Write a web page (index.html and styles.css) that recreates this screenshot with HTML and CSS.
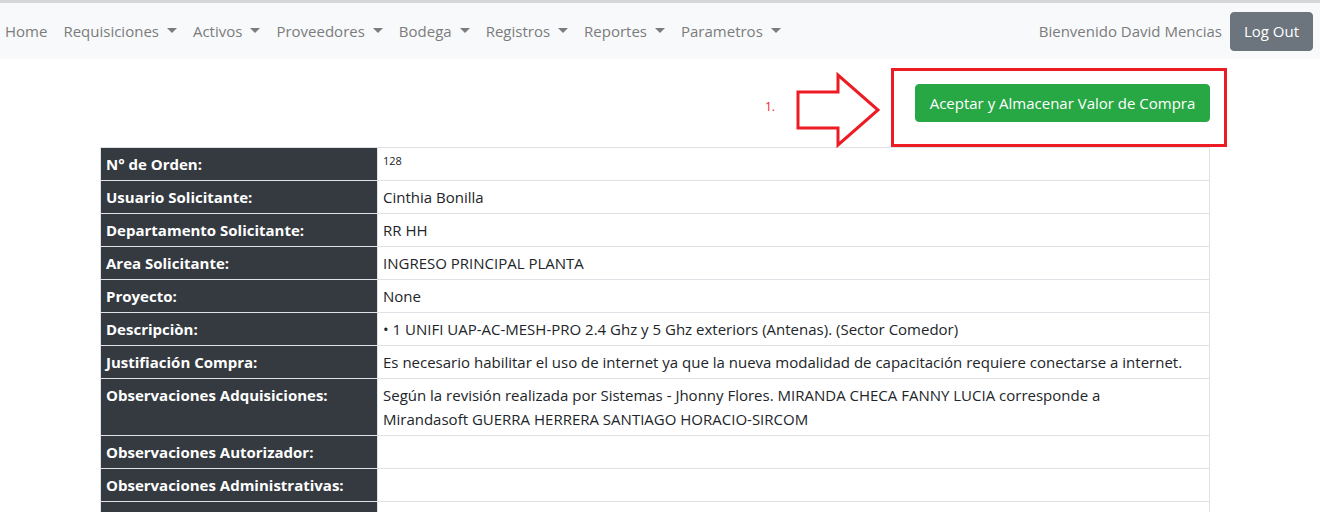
FILE: index.html
```html
<!DOCTYPE html>
<html lang="es">
<head>
<meta charset="utf-8">
<title>Requisición</title>
<link rel="stylesheet" href="styles.css">
</head>
<body>
<nav class="navbar">
  <ul class="nav-menu">
    <li><a class="nav-link" href="#">Home</a></li>
    <li><a class="nav-link dropdown" href="#">Requisiciones</a></li>
    <li><a class="nav-link dropdown" href="#">Activos</a></li>
    <li><a class="nav-link dropdown" href="#">Proveedores</a></li>
    <li><a class="nav-link dropdown" href="#">Bodega</a></li>
    <li><a class="nav-link dropdown" href="#">Registros</a></li>
    <li><a class="nav-link dropdown" href="#">Reportes</a></li>
    <li><a class="nav-link dropdown" href="#">Parametros</a></li>
  </ul>
  <div class="nav-user">
    <span class="welcome">Bienvenido David Mencias</span>
    <button class="btn btn-secondary">Log Out</button>
  </div>
</nav>

<main class="container">
  <div class="action-row">
    <span class="annot-num">1.</span>
    <svg class="annot-arrow" width="88" height="76" viewBox="0 0 88 76">
      <polygon points="3,20 43,20 43,3 83,38 43,73 43,56 3,56" fill="none" stroke="#ed1c24" stroke-width="3" stroke-linejoin="miter"/>
    </svg>
    <div class="annot-box"></div>
    <button class="btn btn-success">Aceptar y Almacenar Valor de Compra</button>
  </div>

  <table class="detail">
    <colgroup><col class="col-label"><col></colgroup>
    <tbody>
      <tr><th>N° de Orden:</th><td><span class="small">128</span></td></tr>
      <tr><th>Usuario Solicitante:</th><td>Cinthia Bonilla</td></tr>
      <tr><th>Departamento Solicitante:</th><td>RR HH</td></tr>
      <tr><th>Area Solicitante:</th><td>INGRESO PRINCIPAL PLANTA</td></tr>
      <tr><th>Proyecto:</th><td>None</td></tr>
      <tr><th>Descripciòn:</th><td>• 1 UNIFI UAP-AC-MESH-PRO 2.4 Ghz y 5 Ghz exteriors (Antenas). (Sector Comedor)</td></tr>
      <tr><th>Justifiación Compra:</th><td>Es necesario habilitar el uso de internet ya que la nueva modalidad de capacitación requiere conectarse a internet.</td></tr>
      <tr><th>Observaciones Adquisiciones:</th><td>Según la revisión realizada por Sistemas - Jhonny Flores. MIRANDA CHECA FANNY LUCIA corresponde a<br>Mirandasoft GUERRA HERRERA SANTIAGO HORACIO-SIRCOM</td></tr>
      <tr><th>Observaciones Autorizador:</th><td></td></tr>
      <tr><th>Observaciones Administrativas:</th><td></td></tr>
      <tr><th>&nbsp;</th><td></td></tr>
    </tbody>
  </table>
</main>
</body>
</html>
```

FILE: styles.css
```css
* { box-sizing: border-box; }

html, body {
  margin: 0;
  padding: 0;
  background: #ffffff;
}

body {
  font-family: "Open Sans", "Noto Sans", sans-serif;
  font-size: 15px;
  line-height: 24px;
  color: #212529;
  overflow: hidden;
}

/* ---------- navbar ---------- */
.navbar {
  display: flex;
  align-items: center;
  justify-content: space-between;
  height: 59px;
  border-top: 3px solid #d6d6d6;
  background: #f8f9fa;
  padding: 0 7px 0 5px;
}

.nav-menu {
  display: flex;
  align-items: center;
  gap: 16px;
  list-style: none;
  margin: 0;
  padding: 0;
}

.nav-link {
  color: #7b7c7d;
  text-decoration: none;
  font-size: 15px;
}

.nav-link.dropdown::after {
  content: "";
  display: inline-block;
  margin-left: 8px;
  vertical-align: 4px;
  border-top: 5px solid #7b7c7d;
  border-left: 5px solid transparent;
  border-right: 5px solid transparent;
}

.nav-user {
  display: flex;
  align-items: center;
  gap: 8px;
}

.welcome {
  color: #7b7c7d;
  font-size: 15px;
}

.btn {
  font-family: inherit;
  font-size: 15px;
  line-height: 24px;
  border: 1px solid transparent;
  border-radius: 4px;
  padding: 6px 12px;
  cursor: pointer;
}

.btn-secondary {
  background: #6c757d;
  border-color: #6c757d;
  color: #ffffff;
  height: 39px;
  width: 83px;
  padding: 6px 0;
}

.btn-success {
  background: #28a745;
  border-color: #28a745;
  color: #ffffff;
  height: 38px;
  width: 295px;
  padding: 6px 0;
}

/* ---------- content ---------- */
.container {
  width: 1110px;
  margin-left: 100px;
  padding-top: 25px;
}

.action-row {
  position: relative;
  display: flex;
  justify-content: flex-end;
  margin-bottom: 25px;
}

.annot-num {
  position: absolute;
  left: 665px;
  top: 15px;
  font-size: 12px;
  line-height: 16px;
  color: #ed1c24;
}

.annot-arrow {
  position: absolute;
  left: 695px;
  top: -12px;
}

.annot-box {
  position: absolute;
  left: 791px;
  top: -16px;
  width: 336px;
  height: 79px;
  border: 3px solid #ed1c24;
  pointer-events: none;
}

/* ---------- table ---------- */
.detail {
  width: 1110px;
  border-collapse: collapse;
  table-layout: fixed;
}

.col-label { width: 277px; }

.detail th,
.detail td {
  border: 1px solid #dee2e6;
  padding: 4px 5px;
  line-height: 24px;
  vertical-align: top;
  text-align: left;
}

.detail th {
  background: #343a40;
  color: #ffffff;
  font-weight: 700;
}

.detail td {
  color: #212529;
}

.small {
  display: inline-block;
  font-size: 11px;
  line-height: 18px;
  vertical-align: top;
}
```
